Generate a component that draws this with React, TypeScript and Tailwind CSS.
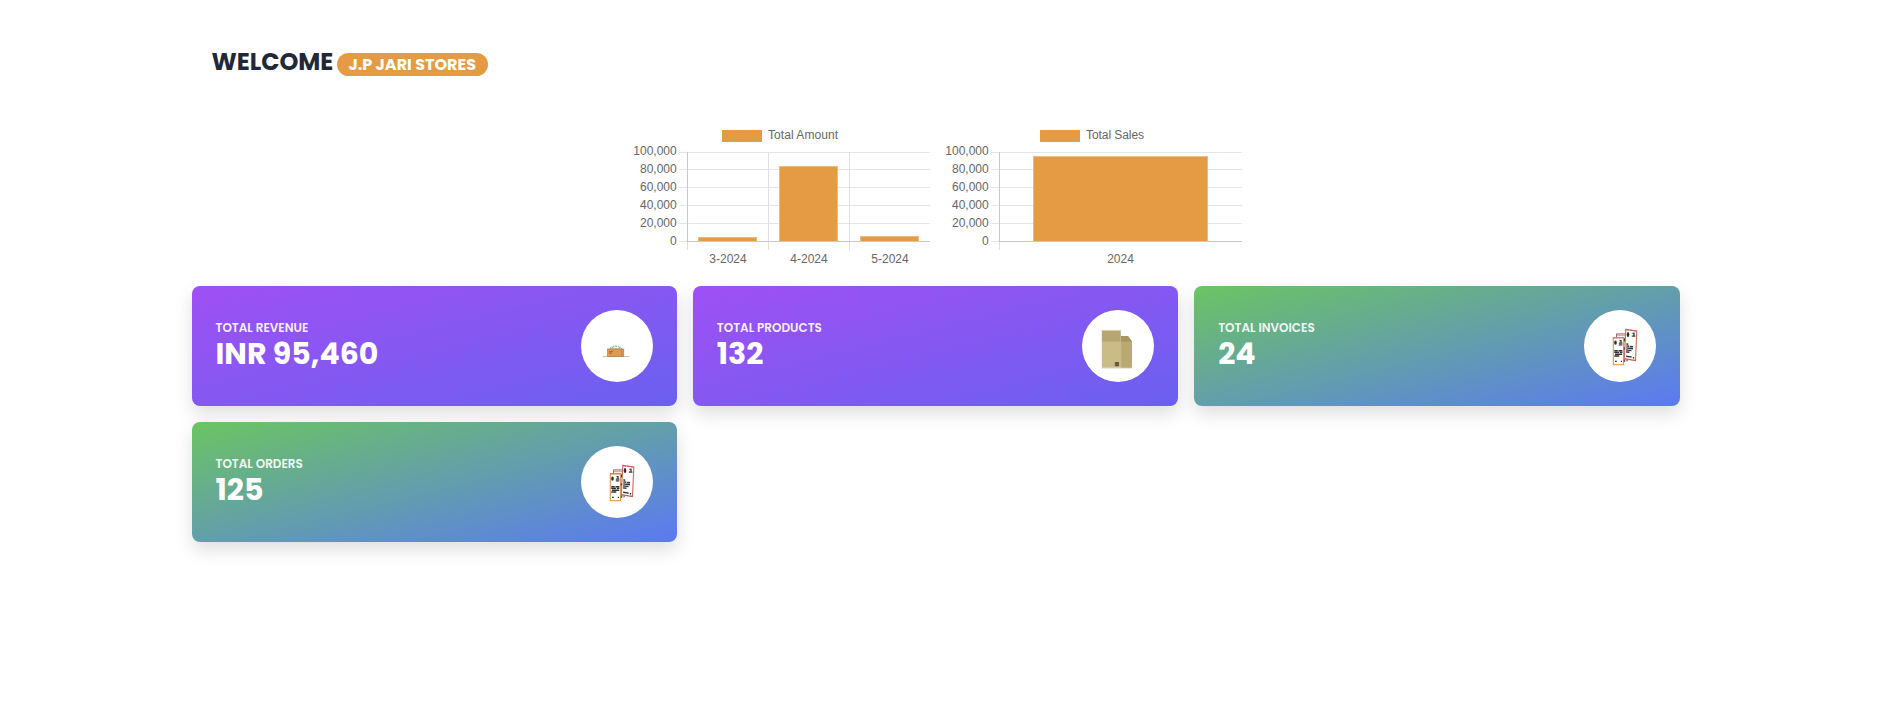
import React from 'react';

const ORANGE = '#e59b44';

type Bar = { x: number; w: number; y: number };

type ChartProps = {
  label: string;
  left: number;
  legendX: number;
  gridX: number[];
  bars: Bar[];
  ticks: { x: number; text: string }[];
};

const rows = [
  { y: 32, text: '100,000' },
  { y: 49, text: '80,000' },
  { y: 67, text: '60,000' },
  { y: 85, text: '40,000' },
  { y: 103, text: '20,000' },
  { y: 121, text: '0' },
];

function BarChart({ label, left, legendX, gridX, bars, ticks }: ChartProps) {
  const right = left + 243;
  return (
    <svg width="310" height="155" viewBox="0 0 310 155" className="block font-['Liberation_Sans',Arial,sans-serif] text-[12px]" shapeRendering="crispEdges">
      <rect x={legendX} y="10" width="40" height="12" fill={ORANGE} />
      <text x={legendX + 46} y="19" fill="#666" textLength={label.length > 11 ? 70 : 58}>{label}</text>
      {rows.map((r, i) => (
        <g key={r.text}>
          <rect x={left - 8} y={r.y} width={right - left + 8} height="1" fill="#e5e5e5" />
          <text x={left - 10.3} y={r.y + (i === 0 ? 3 : 4)} textAnchor="end" fill="#666">{r.text}</text>
        </g>
      ))}
      {gridX.map((x) => (
        <rect key={x} x={x} y="32" width="1" height="98" fill="#e0e0e0" />
      ))}
      {bars.map((b) => (
        <g key={b.x}>
          <rect x={b.x} y={b.y} width={b.w} height={121 - b.y} fill="#edba7d" />
          <rect x={b.x + 1} y={b.y + 1} width={b.w - 2} height={120 - b.y} fill={ORANGE} />
        </g>
      ))}
      <rect x={left} y="32" width="1" height="89" fill="#c8c8c8" />
      <rect x={left} y="121" width="243" height="1" fill="#c8c8c8" />
      {ticks.map((t) => (
        <text key={t.text} x={t.x} y="143" textAnchor="middle" fill="#666">{t.text}</text>
      ))}
    </svg>
  );
}

function RevenueIcon() {
  return (
    <svg width="48" height="48" viewBox="0 0 48 48">
      <path d="M9.500 34.500h27" stroke="#cfae9e" strokeWidth="0.8" />
      <path d="M17 27c0-2 2-2.500 3-1.500 0-2 2-2 3-1 1-1 3-.5 3 .8 1.500-.5 2.500.5 2.500 1.700z" fill="#edf4ed" stroke="#78a67f" strokeWidth="1" strokeDasharray="2.500 .8" />
      <rect x="14.500" y="27" width="16.300" height="7.500" fill="#dc9b50" stroke="#a8743c" strokeWidth="0.6" />
      <path d="M28.700 27v7" stroke="#b97d3d" strokeWidth="0.7" />
      <path d="M16 29.600h4M16 31.200h3" stroke="#946538" strokeWidth="0.9" />
    </svg>
  );
}

function BoxIcon() {
  return (
    <svg width="48" height="48" viewBox="0 0 48 48">
      <path d="M27 14h7l4 5.500v26.500H27z" fill="#b9a975" />
      <path d="M27 14h7l4 5.500H27z" fill="#a6965f" />
      <rect x="7.800" y="8.500" width="19" height="11" fill="#b7a671" />
      <rect x="7.800" y="19.500" width="19.500" height="26.300" fill="#cbbc87" />
      <path d="M7.500 8.300h19.500M7.500 46h31" stroke="#d5cda9" strokeWidth="0.8" />
      <path d="M8 19.500h30" stroke="#a99963" strokeWidth="0.5" />
      <rect x="20.800" y="40" width="4.200" height="4.200" fill="#736544" />
      <path d="M22.200 40.200v4M23.800 40.200v4" stroke="#4f4634" strokeWidth="0.600" />
    </svg>
  );
}

function InvoiceIcon() {
  return (
    <svg width="48" height="48" viewBox="0 0 48 48">
      <g transform="translate(0 -0.6)">
        <path d="M20.500 17v-4.500h11v27h-2" fill="#f7eeee" stroke="#8d5a59" strokeWidth="0.9" />
        <path d="M21 14h9" stroke="#b98e8c" strokeWidth="0.7" />
        <rect x="17.300" y="16.300" width="10.300" height="27" fill="#fff" stroke="#dc9951" strokeWidth="1.100" />
        <path d="M17 16.500h11" stroke="#ad7144" strokeWidth="0.800" />
        <path d="M29.800 8l11 1.500-1.300 29.700-11.200-1.800z" fill="#fff" stroke="#cf6a62" strokeWidth="1.100" />
        <path d="M30 8.300l10.500 1.500M28.800 37.300l10.300 1.600" stroke="#b8524e" strokeWidth="0.800" strokeDasharray="3 1" />
        <ellipse cx="19.500" cy="21.300" rx="1.300" ry="2.100" fill="#2c2c31" />
        <ellipse cx="32" cy="13" rx="1.300" ry="2.500" fill="#2c2c31" />
        <path d="M23.500 19.300h2M25 18.500v3M22.800 21.700h3.600M22.800 23.400h3.600M36.500 12h1.500M38 11v4M35.800 14.700h3.600" stroke="#3b3b42" strokeWidth="1.300" />
        <path d="M18.300 29.300h3.400m.8 0h3.900M18.300 31h4.800m.8 0h2.500M19 32.800h7.200M18.300 34.600h5M19 40h1.800M24.800 40H26" stroke="#313136" strokeWidth="1.400" />
        <path d="M30.300 22.500l2 .3M30.300 24.500l3 .4m.8.200l3 .3M30.200 26.500l6.800.8M30 28.500l5.500.7M30 30.500l3.500.4M30.200 34.800l5.500.9M37.500 35.500v1.500" stroke="#313136" strokeWidth="1.400" />
        <path d="M28.600 17v3M28.300 26v2M28.300 38v2.500" stroke="#3d2c2c" strokeWidth="1" />
      </g>
    </svg>
  );
}

type CardProps = { title: string; value: string; tone: 'purple' | 'green'; icon: React.ReactNode };

function StatCard({ title, value, tone, icon }: CardProps) {
  const bg = tone === 'purple' ? 'from-[#9f50f4] to-[#6a60f0]' : 'from-[#6bc462] to-[#5b79f3]';
  return (
    <div className={`flex h-[120px] items-center justify-between rounded-lg bg-linear-to-br/srgb ${bg} px-6 shadow-[0_8px_18px_rgba(0,0,0,0.13)]`}>
      <div className="py-px text-white">
        <p className="text-xs/4 font-semibold opacity-90">{title}</p>
        <p className="text-[30px]/9 font-bold">{value}</p>
      </div>
      <div className="flex size-[72px] items-center justify-center rounded-full bg-white">{icon}</div>
    </div>
  );
}

export default function App() {
  return (
    <div className="flex min-h-screen justify-center pr-[7px]">
      <main className="w-[1488px] font-[Poppins,Inter,sans-serif]">
        <h1 className="px-5 pt-11 text-2xl/9 font-bold text-[#1f2937]">
          WELCOME{' '}
          <span className="-ml-px rounded-full bg-[#e59b44] pr-3 pl-[11px] text-base font-bold text-white">J.P JARI STORES</span>
        </h1>
        <section className="mt-10 ml-[434.5px] flex">
          <BarChart
            label="Total Amount"
            left={61}
            legendX={96}
            gridX={[61, 142, 223]}
            bars={[
              { x: 72, w: 59, y: 117 },
              { x: 153, w: 59, y: 46 },
              { x: 234, w: 59, y: 116 },
            ]}
            ticks={[
              { x: 102, text: '3-2024' },
              { x: 183, text: '4-2024' },
              { x: 264, text: '5-2024' },
            ]}
          />
          <BarChart
            label="Total Sales"
            left={63}
            legendX={104}
            gridX={[63]}
            bars={[{ x: 97, w: 175, y: 36 }]}
            ticks={[{ x: 184.5, text: '2024' }]}
          />
        </section>
        <section className="mt-[11px] grid grid-cols-3 gap-4">
          <StatCard title="TOTAL REVENUE" value="INR 95,460" tone="purple" icon={<RevenueIcon />} />
          <StatCard title="TOTAL PRODUCTS" value="132" tone="purple" icon={<BoxIcon />} />
          <StatCard title="TOTAL INVOICES" value="24" tone="green" icon={<InvoiceIcon />} />
          <StatCard title="TOTAL ORDERS" value="125" tone="green" icon={<InvoiceIcon />} />
        </section>
      </main>
    </div>
  );
}
